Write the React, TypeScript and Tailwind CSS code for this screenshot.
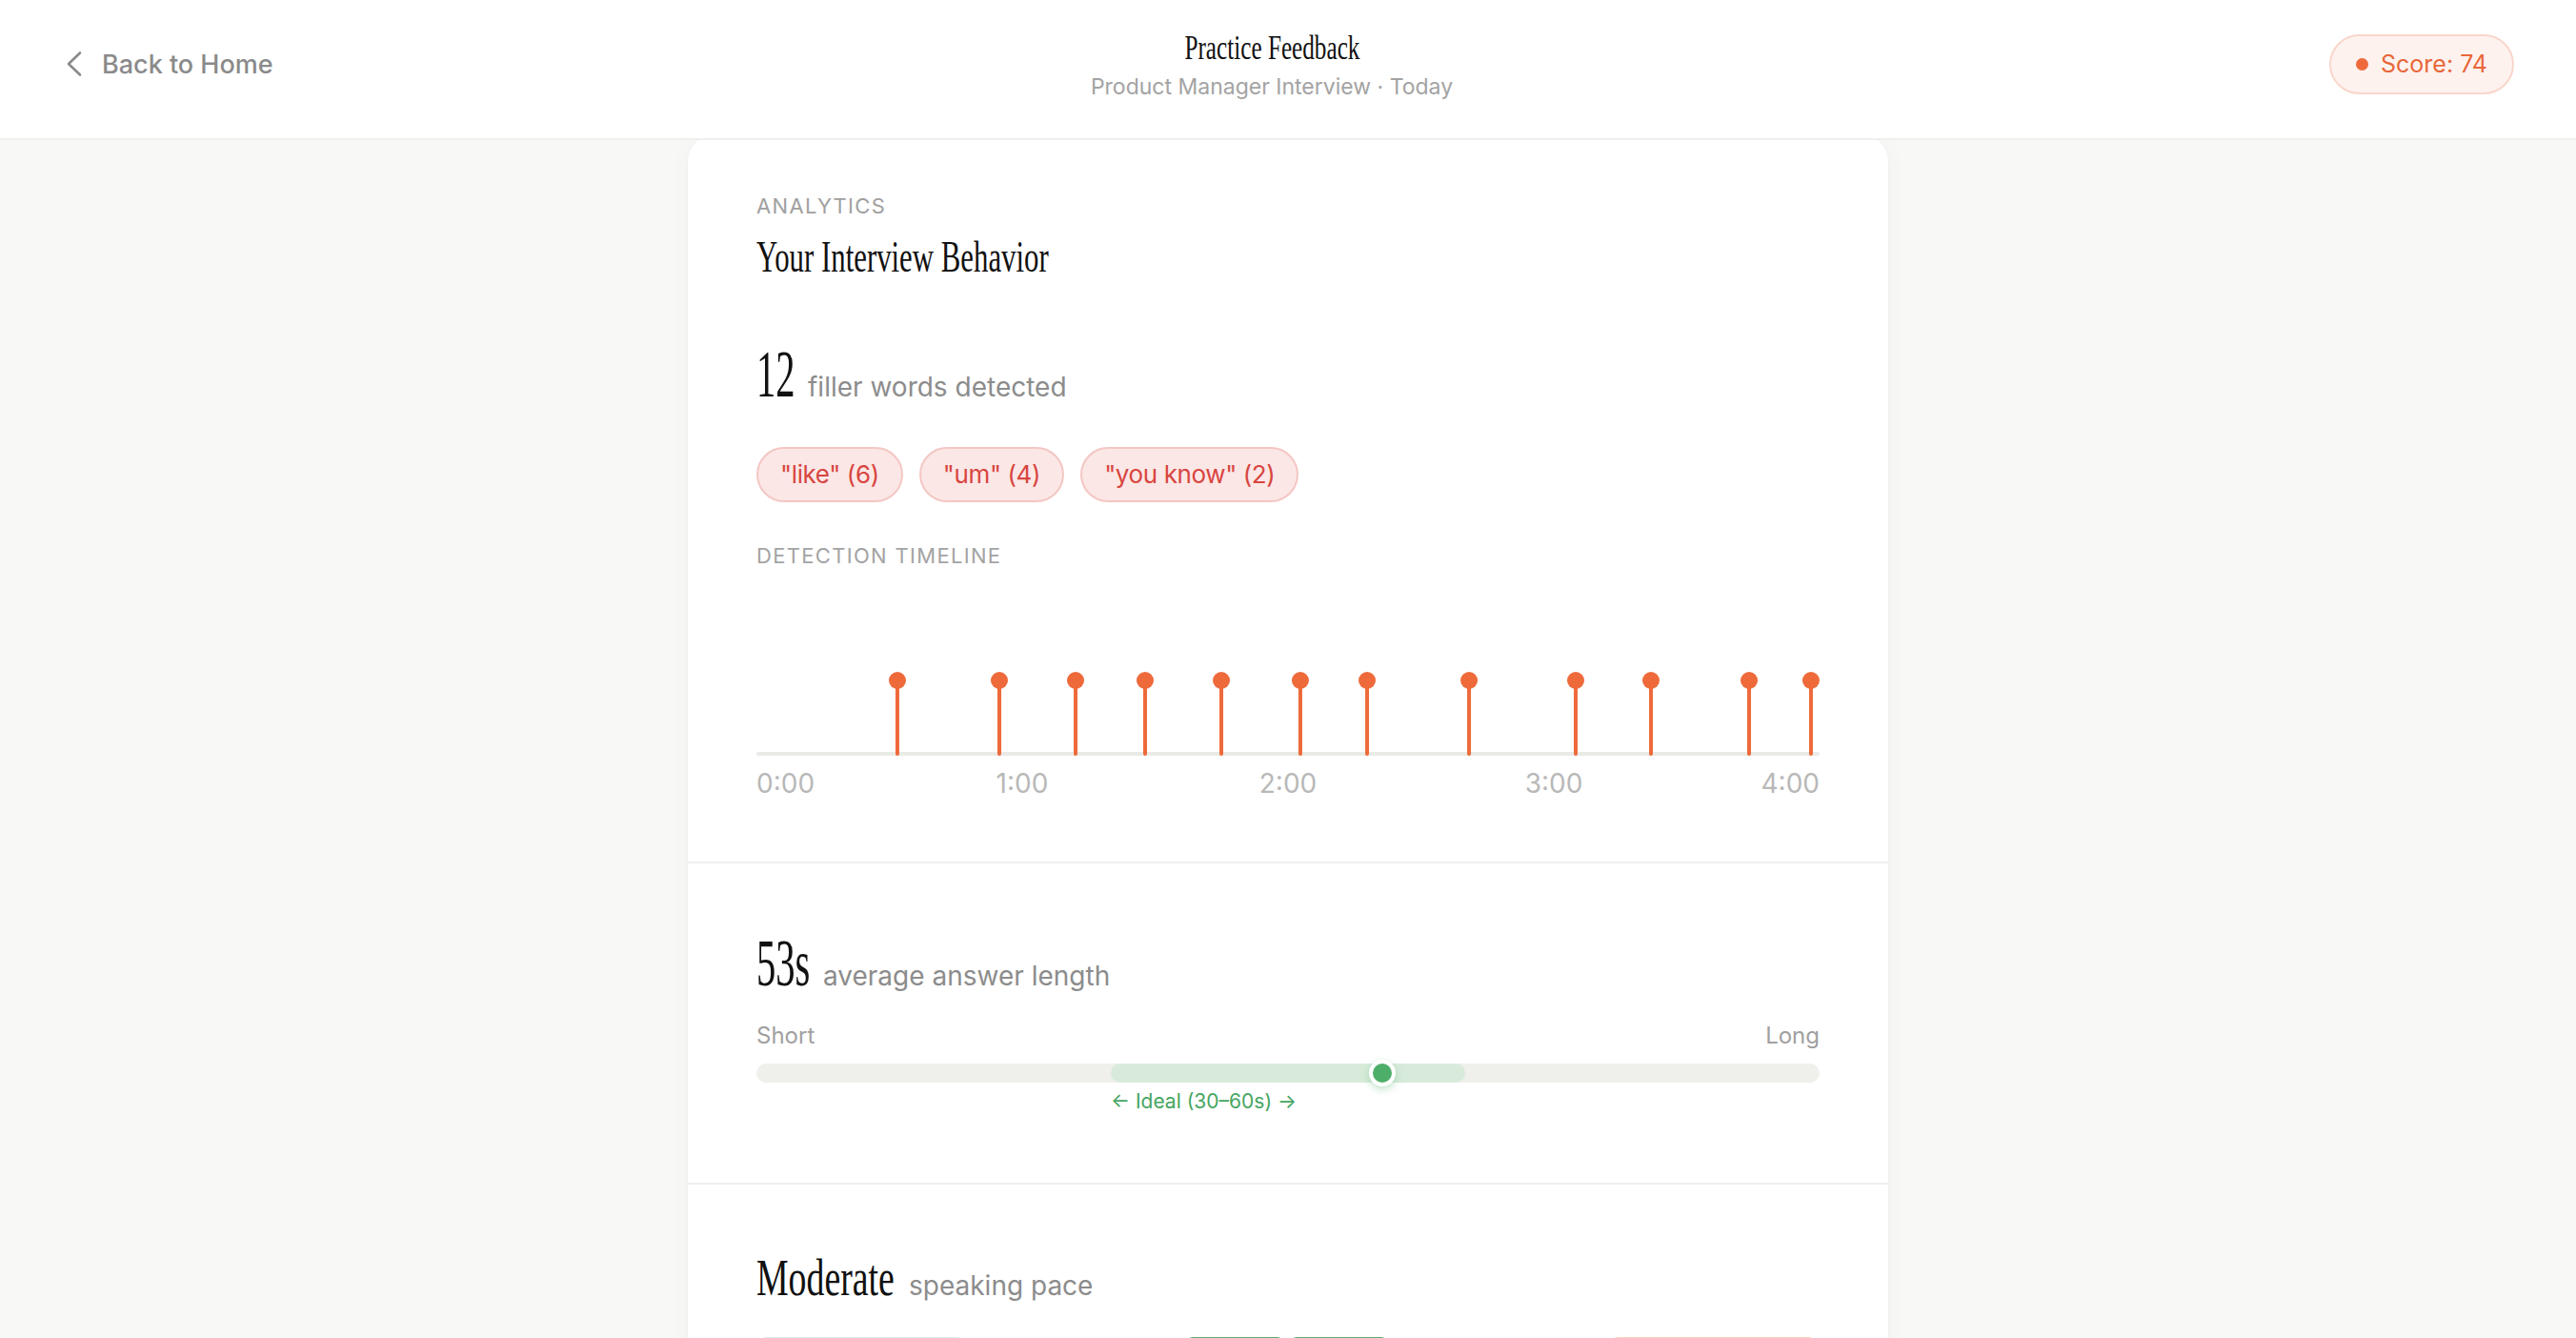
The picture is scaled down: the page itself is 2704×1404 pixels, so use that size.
import React from "react";

const serif = "font-['Liberation_Serif','Times_New_Roman',serif]";

const stems = [13.26, 22.85, 30.02, 36.56, 43.73, 51.16, 57.44, 67.03, 77.06, 84.14, 93.37, 99.19];
const W = 1116;

function Timeline() {
  return (
    <svg className="block h-[156px] w-full" viewBox={`0 0 ${W} 156`} preserveAspectRatio="none">
      <rect x="0" y="149" width={W} height="4" rx="2" fill="#EAEAE6" />
      {stems.map((p, i) => {
        const x = (p / 100) * W;
        return (
          <g key={i}>
            <line x1={x} y1={74} x2={x} y2={151} stroke="#EE6A3B" strokeWidth={4} strokeLinecap="round" />
            <circle cx={x} cy={74} r={9} fill="#EE6A3B" />
          </g>
        );
      })}
    </svg>
  );
}

export default function App() {
  return (
    <div className="min-h-screen bg-[#F8F8F6] font-['Inter','Liberation_Sans',sans-serif]">
      <header className="relative z-10 h-[147px] border-b-2 border-[#EFEFED] bg-white">
        <div className="grid h-[134px] grid-cols-[1fr_auto_1fr] items-center pl-[69px] pr-[65px]">
          <div className="flex items-center gap-[20px] text-[#8A8A8A]">
            <svg width="18" height="28" viewBox="0 0 18 28" fill="none">
              <polyline
                points="15,2.5 3,14 15,25.5"
                stroke="currentColor"
                strokeWidth="2.6"
                strokeLinecap="round"
                strokeLinejoin="round"
              />
            </svg>
            <span className="text-[27px] font-medium leading-none">Back to Home</span>
          </div>
          <div className="mr-[38px] text-center">
            <div className={`${serif} text-[36px] leading-none text-[#111111]`}>
              <span className="inline-block scale-x-[0.7] whitespace-nowrap">Practice Feedback</span>
            </div>
            <div className="mt-[12px] text-[23px] leading-none text-[#A3A3A3]">
              Product Manager Interview · Today
            </div>
          </div>
          <div className="flex justify-end">
            <div className="flex h-[63px] items-center gap-[13px] rounded-full border-2 border-[#F9D6CB] bg-[#FEF2EF] px-[26px]">
              <span className="h-[13px] w-[13px] rounded-full bg-[#EE6A3B]" />
              <span className="text-[25px] leading-none text-[#E8673A]">Score: 74</span>
            </div>
          </div>
        </div>
      </header>

      <main className="-mt-[7px] flex justify-center pb-[80px]">
        <div className="w-[1260px] rounded-[30px] bg-white shadow-[0_0_0_1px_rgba(0,0,0,0.015),0_4px_24px_rgba(0,0,0,0.035)]">
          {/* Section 1 */}
          <section className="px-[72px] pb-[68px] pt-[65px]">
            <div className="text-[22px] leading-none tracking-[0.06em] text-[#A0A0A0]">ANALYTICS</div>
            <div className={`${serif} mt-[20px] text-[46px] leading-none text-[#111111]`}>
              <span className="inline-block origin-left scale-x-[0.67] whitespace-nowrap">Your Interview Behavior</span>
            </div>

            <div className="mt-[65px] flex items-baseline gap-[13px]">
              <span className={`${serif} inline-block w-[41px] whitespace-nowrap text-[70px] leading-none text-[#111111]`}>
                <span className="inline-block origin-left scale-x-[0.58]">12</span>
              </span>
              <span className="text-[28px] leading-none text-[#8C8C8C]">filler words detected</span>
            </div>

            <div className="mt-[41px] flex gap-[17px]">
              {['"like" (6)', '"um" (4)', '"you know" (2)'].map((t) => (
                <div
                  key={t}
                  className="flex h-[58px] items-center rounded-full border-2 border-[#F4C7C3] bg-[#FBE7E6] px-[23px] text-[26px] leading-none tracking-[-0.015em] text-[#D8453F]"
                >
                  {t}
                </div>
              ))}
            </div>

            <div className="mt-[45px] text-[22px] leading-none tracking-[0.06em] text-[#A3A3A3]">DETECTION TIMELINE</div>

            <div className="mt-[46px]">
              <Timeline />
            </div>
            <div className="relative mt-[12px] h-[28px] text-[28px] leading-none text-[#B8B8B8]">
              <span className="absolute left-0 top-0">0:00</span>
              <span className="absolute left-[25%] top-0 -translate-x-1/2">1:00</span>
              <span className="absolute left-[50%] top-0 -translate-x-1/2">2:00</span>
              <span className="absolute left-[75%] top-0 -translate-x-1/2">3:00</span>
              <span className="absolute right-0 top-0">4:00</span>
            </div>
          </section>

          {/* Section 2 */}
          <section className="border-t-2 border-[#F0F0EE] px-[72px] pb-[75px] pt-[70px]">
            <div className="flex items-baseline gap-[13px]">
              <span className={`${serif} inline-block w-[57px] whitespace-nowrap text-[70px] leading-none text-[#111111]`}>
                <span className="inline-block origin-left scale-x-[0.58]">53s</span>
              </span>
              <span className="text-[28px] leading-none text-[#8C8C8C]">average answer length</span>
            </div>
            <div className="mt-[29px] flex justify-between text-[24px] leading-none text-[#A0A0A0]">
              <span>Short</span>
              <span>Long</span>
            </div>
            <div className="relative mt-[17px] h-[20px] rounded-full bg-[#EFEFEC]">
              <div className="absolute left-[33.333%] top-0 h-full w-[33.333%] rounded-full bg-[#D8EBDB]" />
              <div className="absolute left-[58.89%] top-1/2 h-[28px] w-[28px] -translate-x-1/2 -translate-y-1/2 rounded-full border-[4px] border-white bg-[#4DAE69] shadow-[0_3px_8px_rgba(77,174,105,0.35)]" />
            </div>
            <div className="mt-[9px] pl-[33.333%] text-[21px] leading-none text-[#45A561]">← Ideal (30–60s) →</div>
          </section>

          {/* Section 3 */}
          <section className="border-t-2 border-[#F0F0EE] px-[72px] pb-[40px] pt-[71px]">
            <div className="flex items-baseline gap-[15px]">
              <span className={`${serif} inline-block w-[145px] whitespace-nowrap text-[54px] leading-none text-[#111111]`}>
                <span className="inline-block origin-left scale-x-[0.7]">Moderate</span>
              </span>
              <span className="text-[28px] leading-none text-[#8C8C8C]">speaking pace</span>
            </div>
            <div className="mt-[35px] flex h-[60px]">
              <div className="ml-[4px] w-[213px] rounded-t-[6px] bg-[#DCE8F3]" />
              <div className="ml-[235px] w-[101px] rounded-t-[6px] bg-[#5BAE6F]" />
              <div className="ml-[8px] w-[101px] rounded-t-[6px] bg-[#5BAE6F]" />
              <div className="ml-[236px] w-[213px] rounded-t-[6px] bg-[#F6D3B9]" />
            </div>
          </section>
        </div>
      </main>
    </div>
  );
}
